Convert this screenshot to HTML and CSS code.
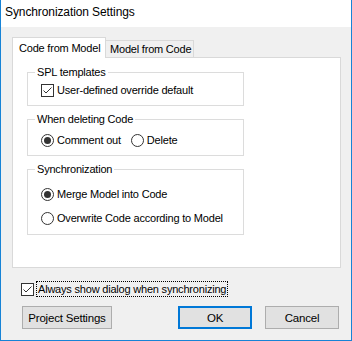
FILE: index.html
```html
<!DOCTYPE html>
<html lang="en">
<head>
  <meta charset="UTF-8">
  <title>Synchronization Settings</title>
  <link rel="stylesheet" href="styles.css">
</head>
<body>
  <div class="window">
    <div class="titlebar">Synchronization Settings</div>

    <div class="dialog">
      <div class="tabs">
        <div class="tab active">Code from Model</div>
        <div class="tab">Model from Code</div>
      </div>

      <div class="panel">
        <div class="group group-spl">
          <span class="group-title">SPL templates</span>
          <label class="option">
            <span class="box checked">
              <svg width="11" height="11" viewBox="0 0 11 11"><path d="M1.5 5.5 L4 8 L9.5 2.5" fill="none" stroke="#333" stroke-width="1"/></svg>
            </span>
            User-defined override default
          </label>
        </div>

        <div class="group group-delete">
          <span class="group-title">When deleting Code</span>
          <div class="row">
            <label class="option"><span class="radio on"></span>Comment out</label>
            <label class="option"><span class="radio"></span>Delete</label>
          </div>
        </div>

        <div class="group group-sync">
          <span class="group-title">Synchronization</span>
          <label class="option"><span class="radio on"></span>Merge Model into Code</label>
          <label class="option"><span class="radio"></span>Overwrite Code according to Model</label>
        </div>
      </div>

      <label class="option always">
        <span class="box checked">
          <svg width="11" height="11" viewBox="0 0 11 11"><path d="M1.5 5.5 L4 8 L9.5 2.5" fill="none" stroke="#333" stroke-width="1"/></svg>
        </span>
        <span class="focus">Always show dialog when synchronizing</span>
      </label>

      <div class="buttons">
        <button class="btn btn-project">Project Settings</button>
        <button class="btn btn-ok">OK</button>
        <button class="btn btn-cancel">Cancel</button>
      </div>
    </div>
  </div>
</body>
</html>
```

FILE: styles.css
```css
html, body {
  margin: 0;
  padding: 0;
}

body {
  font-family: 'Liberation Sans', Arial, sans-serif;
  font-size: 11px;
  letter-spacing: -0.2px;
  color: #000;
}

.window {
  width: 352px;
  height: 341px;
  box-sizing: border-box;
  background-color: #f0f0f0;
  border: 1px solid #1783d6;
  border-top: none;
}

.titlebar {
  height: 27px;
  line-height: 25px;
  padding-left: 4px;
  background-color: #fff;
  font-size: 12px;
  letter-spacing: -0.1px;
}

.dialog {
  padding: 10px 10px 0 11px;
}

/* tabs */
.tabs {
  display: flex;
  align-items: flex-end;
  height: 20px;
}

.tab {
  box-sizing: border-box;
  border: 1px solid #d9d9d9;
  border-bottom: none;
  border-left: none;
  background-color: #f0f0f0;
  height: 17px;
  line-height: 16px;
  width: 88px;
  padding-left: 4px;
  white-space: nowrap;
}

.tab.active {
  position: relative;
  z-index: 1;
  background-color: #fff;
  height: 21px;
  line-height: 20px;
  width: 94px;
  padding-left: 6px;
  margin-bottom: -1px;
  border-left: 1px solid #d9d9d9;
}

.panel {
  box-sizing: border-box;
  width: 329px;
  height: 211px;
  background-color: #fff;
  border: 1px solid #d9d9d9;
  padding: 14px 0 0 14px;
}

/* group boxes */
.group {
  position: relative;
  box-sizing: border-box;
  width: 217px;
  border: 1px solid #dcdcdc;
  padding-left: 13px;
  margin-bottom: 13px;
}

.group-title {
  position: absolute;
  top: -8px;
  left: 7px;
  padding: 0 2px;
  line-height: 14px;
  background-color: #fff;
}

.group-spl {
  height: 34px;
  padding-top: 11px;
}

.group-delete {
  height: 37px;
  padding-top: 14px;
}

.group-sync {
  height: 66px;
  padding-top: 18px;
  display: flex;
  flex-direction: column;
  gap: 11px;
}

.row {
  display: flex;
  gap: 10px;
}

.option {
  display: flex;
  align-items: center;
  height: 13px;
  line-height: 13px;
  white-space: nowrap;
}

.box {
  box-sizing: border-box;
  width: 13px;
  height: 13px;
  border: 1px solid #333;
  background-color: #fff;
  margin-right: 3px;
  display: flex;
}

.radio {
  box-sizing: border-box;
  width: 13px;
  height: 13px;
  border: 1px solid #333;
  border-radius: 50%;
  background-color: #fff;
  margin-right: 3px;
  display: flex;
  align-items: center;
  justify-content: center;
}

.radio.on::after {
  content: "";
  width: 7px;
  height: 7px;
  border-radius: 50%;
  background-color: #333;
}

/* bottom */
.always {
  margin: 13px 0 0 9px;
  height: 16px;
}

.always .box {
  margin-right: 2px;
}

.focus {
  border: 1px dotted #000;
  padding: 0 1px;
  line-height: 14px;
}

.buttons {
  display: flex;
  gap: 13px;
  margin: 9px 2px 0 10px;
}

.btn {
  box-sizing: border-box;
  height: 23px;
  width: 74px;
  font-family: inherit;
  font-size: 11.5px;
  letter-spacing: -0.2px;
  background-color: #e1e1e1;
  border: 1px solid #adadad;
  padding: 0;
  color: #000;
}

.btn-project {
  width: 90px;
}

.btn-ok {
  margin-left: auto;
  border: 2px solid #0078d7;
}
```
